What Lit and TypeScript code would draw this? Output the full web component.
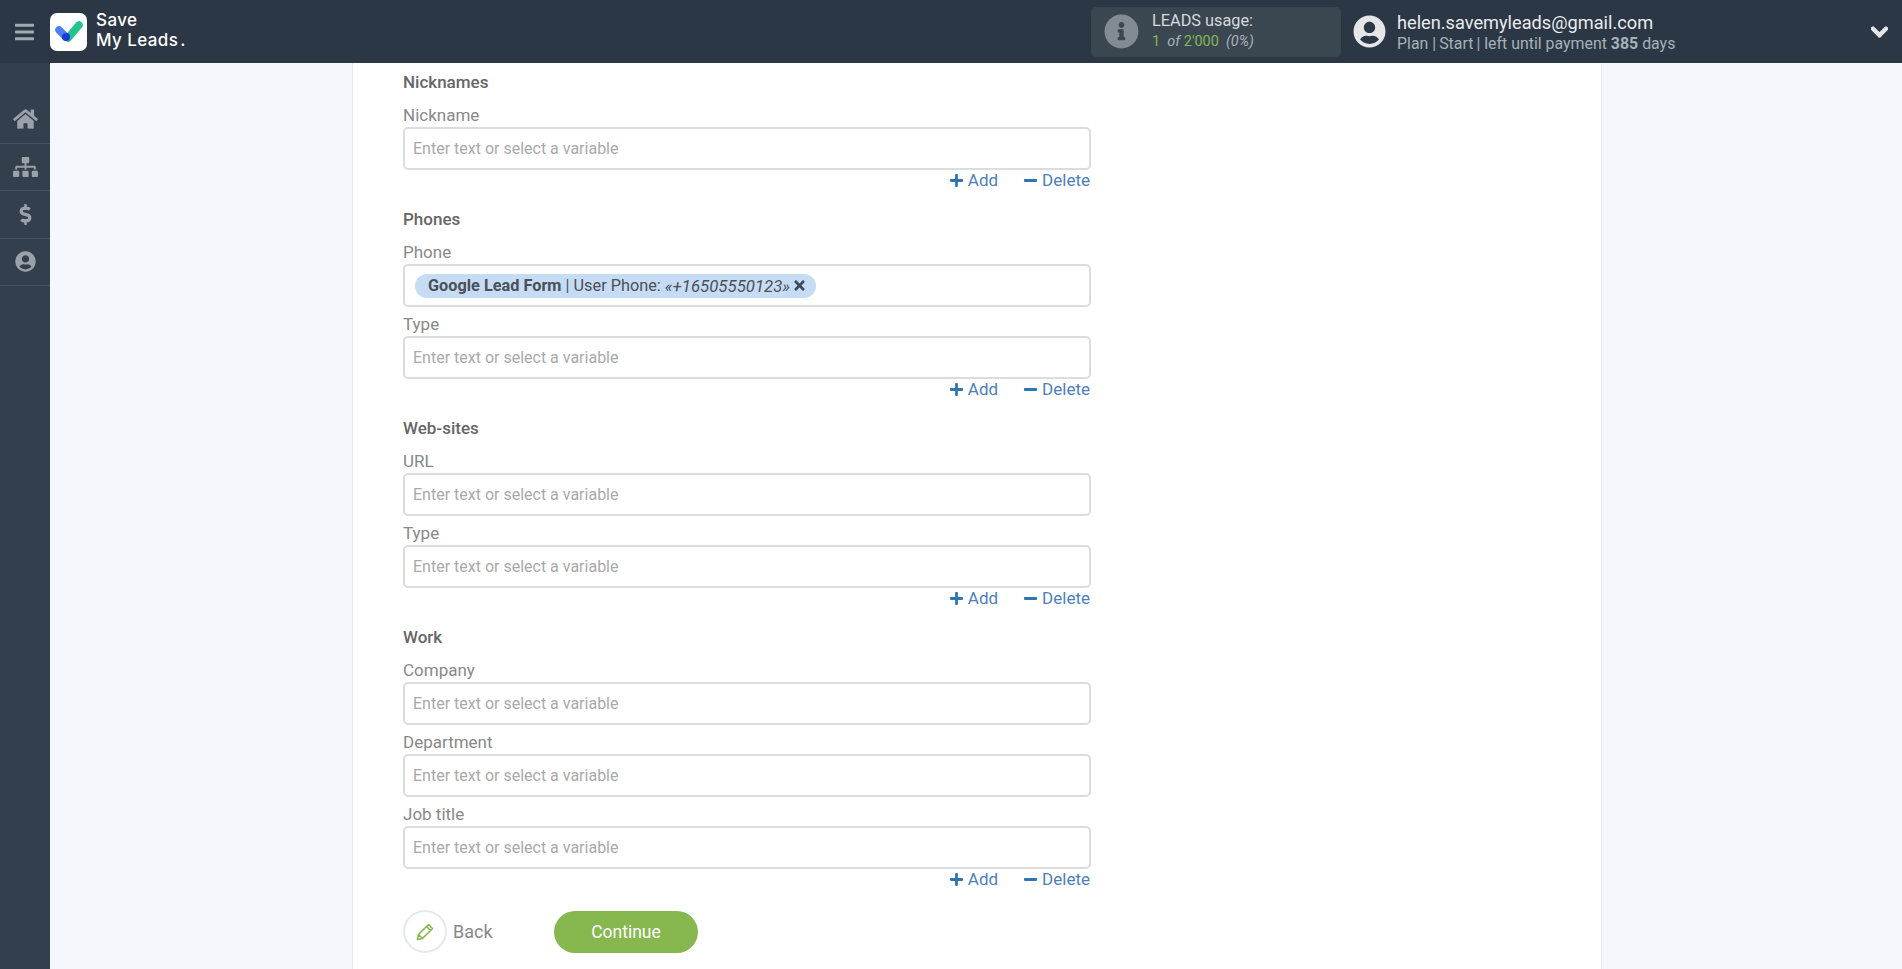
import { LitElement, html, css, svg } from "lit";
import { customElement } from "lit/decorators.js";

const P = {
  home: ["0 0 576 512", "M280.37 148.26L96 300.11V464a16 16 0 0 0 16 16l112.06-.29a16 16 0 0 0 15.92-16V368a16 16 0 0 1 16-16h64a16 16 0 0 1 16 16v95.64a16 16 0 0 0 16 16.05L464 480a16 16 0 0 0 16-16V300L295.67 148.26a12.19 12.19 0 0 0-15.3 0zM571.6 251.47L488 182.56V44.05a12 12 0 0 0-12-12h-56a12 12 0 0 0-12 12v72.61L318.47 43a48 48 0 0 0-61 0L4.34 251.47a12 12 0 0 0-1.6 16.9l25.5 31A12 12 0 0 0 45.15 301l235.22-193.74a12.19 12.19 0 0 1 15.3 0L530.9 301a12 12 0 0 0 16.9-1.6l25.5-31a12 12 0 0 0-1.7-16.93z"],
  sitemap: ["0 0 640 512", "M128 352H32c-17.67 0-32 14.33-32 32v96c0 17.67 14.33 32 32 32h96c17.67 0 32-14.33 32-32v-96c0-17.67-14.33-32-32-32zm-24-80h192v48h48v-48h192v48h48v-57.59c0-21.17-17.23-38.41-38.41-38.41H344v-64h40c17.67 0 32-14.33 32-32V32c0-17.67-14.33-32-32-32H256c-17.67 0-32 14.33-32 32v96c0 17.67 14.33 32 32 32h40v64H94.41C73.23 224 56 241.23 56 262.41V320h48v-48zm264 80h-96c-17.67 0-32 14.33-32 32v96c0 17.67 14.33 32 32 32h96c17.67 0 32-14.33 32-32v-96c0-17.67-14.33-32-32-32zm240 0h-96c-17.67 0-32 14.33-32 32v96c0 17.67 14.33 32 32 32h96c17.67 0 32-14.33 32-32v-96c0-17.67-14.33-32-32-32z"],
  dollar: ["0 0 288 512", "M209.2 233.4l-108-31.6C88.7 198.2 80 186.5 80 173.5c0-16.3 13.2-29.5 29.5-29.5h66.3c12.2 0 24.2 3.7 34.2 10.5 6.1 4.1 14.3 3.1 19.5-2l34.8-34c7.1-6.9 6.1-18.4-1.8-24.5C238 74.8 207.4 64.1 176 64V16c0-8.8-7.2-16-16-16h-32c-8.8 0-16 7.2-16 16v48h-2.5C45.8 64-5.4 118.7.5 183.6c4.2 46.1 39.4 83.6 83.8 96.6l102.5 30c12.5 3.7 21.2 15.3 21.2 28.3 0 16.3-13.2 29.5-29.5 29.5h-66.3C100 368 88 364.3 78 357.5c-6.1-4.1-14.3-3.1-19.5 2l-34.8 34c-7.1 6.9-6.1 18.4 1.8 24.5 24.5 19.2 55.1 29.9 86.5 30v48c0 8.8 7.2 16 16 16h32c8.8 0 16-7.2 16-16v-48.2c46.6-.9 90.3-28.6 105.7-72.7 21.5-61.6-14.6-124.8-72.5-141.7z"],
  user: ["0 0 496 512", "M248 8C111 8 0 119 0 256s111 248 248 248 248-111 248-248S385 8 248 8zm0 96c48.6 0 88 39.4 88 88s-39.4 88-88 88-88-39.4-88-88 39.4-88 88-88zm0 344c-58.7 0-111.3-26.6-146.5-68.2 18.8-35.4 55.6-59.8 98.5-59.8 2.4 0 4.8.4 7.1 1.1 13 4.2 26.6 6.9 40.9 6.9 14.3 0 28-2.7 40.9-6.9 2.3-.7 4.7-1.1 7.1-1.1 42.9 0 79.7 24.4 98.5 59.8C359.3 421.4 306.7 448 248 448z"],
  info: ["0 0 512 512", "M256 8C119 8 8 119.1 8 256c0 137 111 248 248 248s248-111 248-248C504 119.1 393 8 256 8zm0 110c23.2 0 42 18.8 42 42s-18.8 42-42 42-42-18.8-42-42 18.8-42 42-42zm56 254c0 6.6-5.4 12-12 12h-88c-6.6 0-12-5.4-12-12v-24c0-6.6 5.4-12 12-12h12v-64h-12c-6.6 0-12-5.4-12-12v-24c0-6.6 5.4-12 12-12h64c6.6 0 12 5.4 12 12v100h12c6.6 0 12 5.4 12 12v24z"],
  bars: ["0 0 448 512", "M16 132h416c8.8 0 16-7.2 16-16V76c0-8.8-7.2-16-16-16H16C7.2 60 0 67.2 0 76v40c0 8.8 7.2 16 16 16zm0 160h416c8.8 0 16-7.2 16-16v-40c0-8.8-7.2-16-16-16H16c-8.8 0-16 7.2-16 16v40c0 8.8 7.2 16 16 16zm0 160h416c8.8 0 16-7.2 16-16v-40c0-8.8-7.2-16-16-16H16c-8.8 0-16 7.2-16 16v40c0 8.8 7.2 16 16 16z"],
  chevron: ["0 0 448 512", "M207.029 381.476L12.686 187.132c-9.373-9.373-9.373-24.569 0-33.941l22.667-22.667c9.357-9.357 24.522-9.375 33.901-.04L224 284.505l154.745-154.021c9.379-9.335 24.544-9.317 33.901.04l22.667 22.667c9.373 9.373 9.373 24.569 0 33.941L240.971 381.476c-9.373 9.372-24.569 9.372-33.942 0z"],
  plus: ["0 0 448 512", "M416 208H272V64c0-17.67-14.33-32-32-32h-32c-17.67 0-32 14.33-32 32v144H32c-17.67 0-32 14.33-32 32v32c0 17.67 14.33 32 32 32h144v144c0 17.67 14.33 32 32 32h32c17.67 0 32-14.33 32-32V304h144c17.67 0 32-14.33 32-32v-32c0-17.67-14.33-32-32-32z"],
  minus: ["0 0 448 512", "M416 208H32c-17.67 0-32 14.33-32 32v32c0 17.67 14.33 32 32 32h384c17.67 0 32-14.33 32-32v-32c0-17.67-14.33-32-32-32z"],
  times: ["0 0 352 512", "M242.72 256l100.07-100.07c12.28-12.28 12.28-32.19 0-44.48l-22.24-22.24c-12.28-12.28-32.19-12.28-44.48 0L176 189.28 75.93 89.21c-12.28-12.28-32.19-12.28-44.48 0L9.21 111.45c-12.28 12.28-12.28 32.19 0 44.48L109.28 256 9.21 356.07c-12.28 12.28-12.28 32.19 0 44.48l22.24 22.24c12.28 12.28 32.2 12.28 44.48 0L176 322.72l100.07 100.07c12.28 12.28 32.2 12.28 44.48 0l22.24-22.24c12.28-12.28 12.28-32.19 0-44.48L242.72 256z"],
};

const icon = (n: keyof typeof P, cls: string) =>
  html`<svg class=${cls} viewBox=${P[n][0]} fill="currentColor">${svg`<path d=${P[n][1]}></path>`}</svg>`;

type Field = { label: string; chip?: boolean };
type Section = { title: string; fields: Field[] };

const SECTIONS: Section[] = [
  { title: "Nicknames", fields: [{ label: "Nickname" }] },
  { title: "Phones", fields: [{ label: "Phone", chip: true }, { label: "Type" }] },
  { title: "Web-sites", fields: [{ label: "URL" }, { label: "Type" }] },
  { title: "Work", fields: [{ label: "Company" }, { label: "Department" }, { label: "Job title" }] },
];

@customElement("app-root")
export class AppRoot extends LitElement {
  static styles = css`
    :host { display: block; height: 969px; overflow: hidden; font-family: Roboto, "Liberation Sans", sans-serif; }
    * { box-sizing: border-box; }
    .page { display: flex; flex-direction: column; height: 969px; background: #f4f7fc; }
    header { height: 63px; flex: none; background: #2c3745; display: flex; align-items: center; color: #fff; }
    .burger { width: 19px; height: 22px; margin-left: 15px; color: #a4a9af; flex: none; }
    .logo { width: 37px; height: 38px; margin-left: 16px; background: #fff; border-radius: 7px; flex: none; display: flex; align-items: center; justify-content: center; }
    .logo svg { width: 29px; height: 23px; margin-top: 2px; }
    .brand { margin-left: 9px; margin-top: -3px; font-family: Inter, sans-serif; font-weight: 500; font-size: 17px; line-height: 20px; letter-spacing: 0.4px; width: 140px; flex: none; }
    .usage { margin-left: 855px; width: 250px; height: 50px; background: #3a4751; border-radius: 5px; display: flex; align-items: center; flex: none; }
    .usage .i { width: 35px; height: 35px; margin-left: 13px; color: #838b92; flex: none; }
    .usage .txt { margin-left: 13px; }
    .usage .l1 { font-size: 16.3px; line-height: 20px; color: #d5d9dc; margin-top: -1px; }
    .usage .l2 { font-size: 14.5px; line-height: 20px; color: #a9b2b9; font-style: italic; margin-top: 1px; }
    .usage .l2 b { font-weight: 400; font-style: normal; color: #85b84f; }
    .uicon { width: 33px; height: 33px; margin-left: 12px; color: #e5e6e8; flex: none; }
    .who { margin-left: 11px; margin-top: 2px; flex: none; width: 450px; }
    .who .mail { font-size: 18.2px; line-height: 22px; color: #e9ebed; }
    .who .plan { font-size: 15.9px; line-height: 20px; color: #a6b1ba; white-space: pre; }
    .who .plan .st { margin: 0 3px; }
    .who .plan b { font-weight: 700; }
    .chev { width: 17px; height: 20px; color: #e5e7e9; flex: none; margin-left: 24px; stroke: currentColor; stroke-width: 34; }
    .body { flex: 1; display: flex; min-height: 0; }
    nav { width: 50px; flex: none; background: #343f4e; padding-top: 33px; }
    nav div { height: 47.5px; border-bottom: 1px solid #465160; display: flex; align-items: center; justify-content: center; color: #9ba1a9; }
    nav svg { height: 22px; width: 25px; }
    nav .s { height: 21px; }
    .panel { margin-left: 302px; width: 1250px; flex: none; background: #fff; border-left: 1px solid #e6e9ee; border-right: 1px solid #e6e9ee; padding: 7px 0 0 50px; overflow: hidden; }
    .sec { width: 688px; margin-bottom: 16px; }
    h3 { margin: 0 0 9px; font-size: 17px; font-weight: 500; line-height: 24px; color: #666; }
    .lab { font-size: 17px; line-height: 24px; color: #888; height: 24px; margin-top: 5px; }
    h3 + .f .lab { margin-top: 0; }
    .inp { height: 43px; border: 2px solid #dcdcdc; border-radius: 5px; display: flex; align-items: center; padding-left: 8px; font-size: 16px; color: #a9a9a9; }
    .chip { height: 24px; margin-left: 2px; border-radius: 12px; background: #c6dcf5; color: #4b5058; padding: 0 11px 0 13px; display: flex; align-items: center; font-size: 16.3px; white-space: pre; }
    .chip b { font-weight: 700; }
    .chip i { font-size: 16.8px; }
    .chip svg { width: 11px; height: 15px; margin-left: 4px; color: #3c4a5c; }
    .acts { display: flex; justify-content: flex-end; gap: 25px; height: 22px; align-items: center; margin-top: -1px; padding-right: 1px; font-size: 17px; color: #4d80bb; }
    .acts span { display: flex; align-items: center; gap: 5px; }
    .acts span:first-child { margin-right: 1px; }
    .acts svg { width: 13px; height: 15px; color: #2e75b6; }
    .btns { display: flex; align-items: center; margin-top: 20px; }
    .pen { width: 44px; height: 43px; border: 2px solid #e2ebe8; border-radius: 50%; display: flex; align-items: center; justify-content: center; }
    .pen svg { width: 20px; height: 20px; }
    .back { margin-left: 6px; font-size: 18px; color: #888; width: 101px; }
    .go { width: 144px; height: 42px; border-radius: 21px; background: #86b84f; color: #fff; font-size: 17.5px; display: flex; align-items: center; justify-content: center; }
  `;

  render() {
    return html`<div class="page">
      <header>
        ${icon("bars", "burger")}
        <div class="logo">
          <svg viewBox="0 0 29 23">
            <line x1="14" y1="17" x2="25" y2="4" stroke="#20c58b" stroke-width="7.5" stroke-linecap="round"></line>
            <line x1="5" y1="9" x2="12" y2="16" stroke="#4a7ff5" stroke-width="7.5" stroke-linecap="round"></line>
            <circle cx="12" cy="16" r="4" fill="#1d39d8"></circle>
          </svg>
        </div>
        <div class="brand">Save<br />My Leads<span style="margin-left:2px">.</span></div>
        <div class="usage">
          ${icon("info", "i")}
          <div class="txt">
            <div class="l1">LEADS usage:</div>
            <div class="l2"><b>1</b>&nbsp; of <b>2'000</b> &nbsp;(0%)</div>
          </div>
        </div>
        ${icon("user", "uicon")}
        <div class="who">
          <div class="mail">helen.savemyleads@gmail.com</div>
          <div class="plan">Plan |<span class="st">Start</span>| left until payment <b>385</b> days</div>
        </div>
        ${icon("chevron", "chev")}
      </header>
      <div class="body">
        <nav>
          <div>${icon("home", "")}</div>
          <div>${icon("sitemap", "")}</div>
          <div>${icon("dollar", "s")}</div>
          <div>${icon("user", "s")}</div>
        </nav>
        <div class="panel">
          ${SECTIONS.map(
            (s) => html`<div class="sec">
              <h3>${s.title}</h3>
              ${s.fields.map(
                (f) => html`<div class="f">
                  <div class="lab">${f.label}</div>
                  <div class="inp">
                    ${f.chip
                      ? html`<div class="chip"><b>Google Lead Form</b> | User Phone: <i>«+16505550123»</i>${icon("times", "")}</div>`
                      : "Enter text or select a variable"}
                  </div>
                </div>`
              )}
              <div class="acts">
                <span>${icon("plus", "")}Add</span>
                <span>${icon("minus", "")}Delete</span>
              </div>
            </div>`
          )}
          <div class="btns">
            <div class="pen">
              <svg viewBox="0 0 20 20" fill="none" stroke="#86b84f" stroke-width="1.6" stroke-linejoin="round">
                <path d="M2.5 17.5l1-5L13.5 2.5l4 4-10 10z M11.5 4.5l4 4 M3.5 12.5l4 4"></path>
              </svg>
            </div>
            <div class="back">Back</div>
            <div class="go">Continue</div>
          </div>
        </div>
      </div>
    </div>`;
  }
}
